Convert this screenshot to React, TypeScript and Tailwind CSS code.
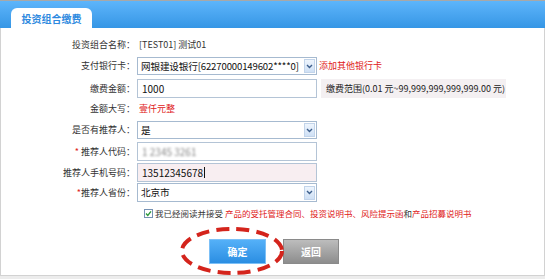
import type { ReactNode } from 'react';

const cjk = "font-['Noto_Sans_CJK_SC','Noto_Sans',sans-serif]";

function Label({ children, star, gap }: { children: ReactNode; star?: boolean; gap?: boolean }) {
  return (
    <div className="w-[136px] shrink-0 pr-[2px] text-right text-[9px] leading-[12px] text-[#333]">
      {star ? <span className="text-[#e02020]">*</span> : null}
      {star && gap ? ' ' : null}
      {children}
    </div>
  );
}

function Row({ label, star, gap, className, children }: { label: string; star?: boolean; gap?: boolean; className: string; children: ReactNode }) {
  return (
    <div className={`flex items-center ${className}`}>
      <Label star={star} gap={gap}>{label}</Label>
      {children}
    </div>
  );
}

function FakeSelect({ value, h = 'h-[18px]' }: { value: string; h?: string }) {
  return (
    <div className={`flex w-[180px] ${h} items-center border border-[#a6bad0] bg-white pl-[3px] pr-px`}>
      <span className="flex-1 whitespace-nowrap text-[9.6px] leading-[13px] tracking-[-0.15px] text-[#111]">{value}</span>
      <span className="flex h-[14px] w-[11px] shrink-0 items-center justify-center border border-[#c2d4ea] bg-gradient-to-b from-[#eef5fd] to-[#cfe0f5]">
        <svg width="7" height="5" viewBox="0 0 7 5">
          <path d="M1 1 L3.5 3.5 L6 1" fill="none" stroke="#3d5f8c" strokeWidth="1.4" />
        </svg>
      </span>
    </div>
  );
}

function FakeInput({ children, bg = 'bg-white' }: { children: ReactNode; bg?: string }) {
  return (
    <div className={`flex h-[19px] w-[180px] items-center border border-[#b4c4d6] ${bg} pl-[4px] text-[10px] leading-[13px] text-[#111]`}>
      {children}
    </div>
  );
}

export default function App() {
  return (
    <div className={`relative h-[279px] w-[545px] overflow-hidden bg-[#ececec] ${cjk}`}>
      <div className="flex h-[28px] items-end border-t border-[#a8a8a8] bg-gradient-to-b from-[#5db5fb] to-[#3596e5] pl-[11px]">
        <div className="flex h-[20px] w-[81px] items-center justify-center rounded-t-[6px] bg-white text-[10px] font-bold text-[#2e8ae0]">
          投资组合缴费
        </div>
      </div>

      <div className="flex h-[248px] flex-col border-x border-b border-[#d2d2d2] bg-white pt-[8px]">
        <Row label="投资组合名称：" className="h-[18px]">
          <span className="pl-[2px] text-[9px] leading-[12px] text-[#333]">[TEST01] 测试01</span>
        </Row>

        <Row label="支付银行卡：" className="mt-[3px] h-[18px]">
          <FakeSelect value="网银建设银行[62270000149602****0]" />
          <span className="pl-[2px] text-[9px] leading-[12px] text-[#e02020]">添加其他银行卡</span>
        </Row>

        <Row label="缴费金额：" className="mt-[4px] h-[19px]">
          <FakeInput>1000</FakeInput>
          <span className="ml-[4px] flex h-[19px] w-[185px] items-center bg-[#f4f0f2] pl-[5px] text-[9px] leading-[12px] text-[#222]">
            缴费范围(0.01 元~99,999,999,999,999.00 元)
          </span>
        </Row>

        <Row label="金额大写：" className="mt-[2px] h-[18px]">
          <span className="pl-[2px] text-[9px] leading-[12px] text-[#e02020]">壹仟元整</span>
        </Row>

        <Row label="是否有推荐人：" className="mt-[3px] h-[18px]">
          <FakeSelect value="是" />
        </Row>

        <Row label="推荐人代码：" star gap className="mt-[3px] h-[19px]">
          <FakeInput>
            <span className="blur-[1.2px] text-[#888]">1 2345 3261</span>
          </FakeInput>
        </Row>

        <Row label="推荐人手机号码：" className="mt-[2px] h-[19px]">
          <FakeInput bg="bg-[#f8eef1]">
            13512345678<span className="ml-px inline-block h-[11px] w-px bg-[#111]" />
          </FakeInput>
        </Row>

        <Row label="推荐人省份：" star className="mt-px h-[19px]">
          <FakeSelect value="北京市" h="h-[19px]" />
        </Row>

        <div className="mt-[4px] flex h-[14px] items-center pl-[143px] text-[8.5px] leading-[12px]">
          <svg width="9" height="9" viewBox="0 0 9 9" className="mr-[2px] shrink-0">
            <rect x="0.5" y="0.5" width="8" height="8" fill="#fff" stroke="#7591b3" />
            <path d="M2 4.5 L3.8 6.4 L7 2.4" fill="none" stroke="#2c9a3a" strokeWidth="1.4" />
          </svg>
          <span className="text-[#333]">我已经阅读并接受&nbsp;</span>
          <span className="text-[#e02020]">产品的受托管理合同、投资说明书、风险提示函</span>
          <span className="text-[#333]">和</span>
          <span className="text-[#e02020]">产品招募说明书</span>
        </div>

        <div className="mt-[19px] flex h-[25px] gap-[17px] pl-[208px]">
          <button className="h-[25px] w-[57px] border border-[#7cc0f7] bg-gradient-to-b from-[#54b0f8] to-[#2a8ee2] text-[10px] font-bold text-white">
            确定
          </button>
          <button className="h-[25px] w-[56px] border border-[#8a8a8a] bg-gradient-to-b from-[#bdbdbd] to-[#8d8d8d] text-[10px] font-bold text-white">
            返回
          </button>
        </div>
      </div>

      <svg className="pointer-events-none absolute left-[179px] top-[226px]" width="108" height="52" viewBox="0 0 108 52">
        <ellipse cx="53" cy="25" rx="50" ry="22" fill="none" stroke="#d4241c" strokeWidth="4" strokeDasharray="13 7" />
      </svg>
    </div>
  );
}
